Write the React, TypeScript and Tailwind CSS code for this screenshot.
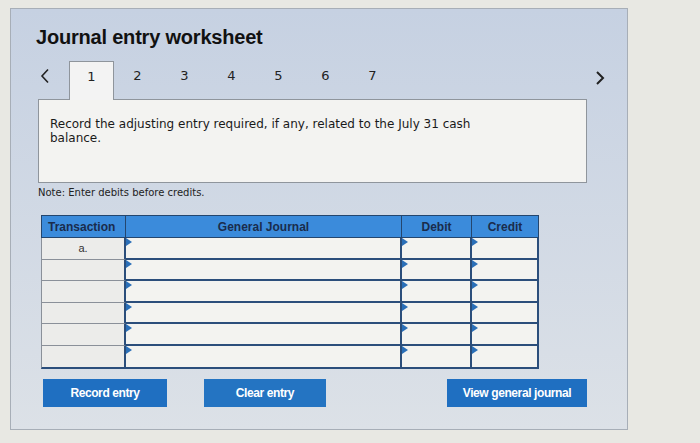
import React from 'react'

const rows = ['a.', '', '', '', '', '']
const tabs = [2, 3, 4, 5, 6, 7]

function Flag() {
  return (
    <span className="absolute left-0 top-0 w-0 h-0 border-t-[4px] border-b-[4px] border-l-[6px] border-t-transparent border-b-transparent border-l-[#2a6fb8]" />
  )
}

function InputCell({ w, last }: { w: string; last: boolean }) {
  return (
    <div className={`relative ${w} h-full bg-[#f3f3f0] border-r-2 border-[#2b4e7b] ${last ? '' : 'border-b-2'}`}>
      <Flag />
    </div>
  )
}

export default function App() {
  return (
    <div className="w-[700px] h-[443px] bg-[#e8e8e3] pt-[8px] pl-[10px] overflow-hidden" style={{ fontFamily: "'DejaVu Sans', Verdana, sans-serif" }}>
      <div className="w-[618px] h-[422px] border border-[#a7aeb7] bg-gradient-to-b from-[#c6d1e2] to-[#dce1e7] pl-[25px] pt-[16px]">
        <h1 className="text-[20px] leading-[24px] font-bold text-[#111] tracking-[-0.2px]" style={{ fontFamily: "'Liberation Sans', Arial, sans-serif" }}>Journal entry worksheet</h1>

        {/* tabs */}
        <div className="flex items-end h-[38px] mt-[12px] w-[565px] relative z-10">
          <span className="w-[33px] h-[39px] pl-[4px] pt-[8px] text-[#222]">
            <svg width="10" height="16" viewBox="0 0 10 16" fill="none" stroke="#222" strokeWidth="1.6">
              <path d="M8 1.5 L2 8 L8 14.5" />
            </svg>
          </span>
          <div className="w-[45px] h-[39px] -mb-px bg-[#f3f3f3] border border-b-0 border-[#8f959c] pt-[7px] text-center text-[13px] leading-[16px] text-[#222]">1</div>
          {tabs.map(t => (
            <div key={t} className="w-[47px] h-[39px] pt-[8px] text-center text-[13px] leading-[16px] text-[#222]">{t}</div>
          ))}
          <span className="ml-auto mr-[-4px] h-[39px] pt-[10px]">
            <svg width="10" height="16" viewBox="0 0 10 16" fill="none" stroke="#222" strokeWidth="2">
              <path d="M2 2 L8 8 L2 14" />
            </svg>
          </span>
        </div>

        <div className="ml-[2px] w-[549px] h-[84px] bg-[#f3f3f1] border border-[#8f959c] pl-[11px] pt-[17px] text-[12px] leading-[14px] text-[#1a1a1a]">
          Record the adjusting entry required, if any, related to the July 31 cash<br />balance.
        </div>

        <p className="mt-[4px] ml-[2px] text-[10px] leading-[12px] text-[#222]">Note: Enter debits before credits.</p>

        {/* table */}
        <div className="mt-[16px] ml-[5px] w-[498px]" style={{ fontFamily: "'Liberation Sans', Arial, sans-serif" }}>
          <div className="flex h-[23px] bg-[#3b8bdb] border border-[#24466e] text-[12px] font-bold text-[#1a2c4c]">
            <div className="w-[84px] border-r border-[#24466e] flex items-center pl-[6px]">Transaction</div>
            <div className="w-[276px] border-r border-[#24466e] flex items-center justify-center">General Journal</div>
            <div className="w-[70px] border-r border-[#24466e] flex items-center justify-center">Debit</div>
            <div className="flex-1 flex items-center justify-center">Credit</div>
          </div>
          <div className="border-l border-b-2 border-l-[#8a9099] border-b-[#2b4e7b]">
            {rows.map((r, i) => {
              const last = i === rows.length - 1
              return (
                <div key={i} className="flex h-[21.5px]">
                  <div className={`w-[84px] h-full bg-[#ececea] border-r-2 border-r-[#2b4e7b] ${last ? '' : 'border-b border-b-[#8a9099]'} flex items-center justify-center text-[11px] text-[#333]`}>{r}</div>
                  <InputCell w="w-[276px]" last={last} />
                  <InputCell w="w-[70px]" last={last} />
                  <InputCell w="flex-1" last={last} />
                </div>
              )
            })}
          </div>
        </div>

        {/* buttons */}
        <div className="flex mt-[10px] ml-[7px] w-[544px] text-[12px] font-bold text-white tracking-[-0.4px]" style={{ fontFamily: "'Liberation Sans', Arial, sans-serif" }}>
          <button className="w-[124px] h-[28px] bg-[#1f6fc1]">Record entry</button>
          <button className="ml-[37px] w-[122px] h-[28px] bg-[#2474c2]">Clear entry</button>
          <button className="ml-auto w-[140px] h-[28px] bg-[#1f6fc1]">View general journal</button>
        </div>
      </div>
    </div>
  )
}
